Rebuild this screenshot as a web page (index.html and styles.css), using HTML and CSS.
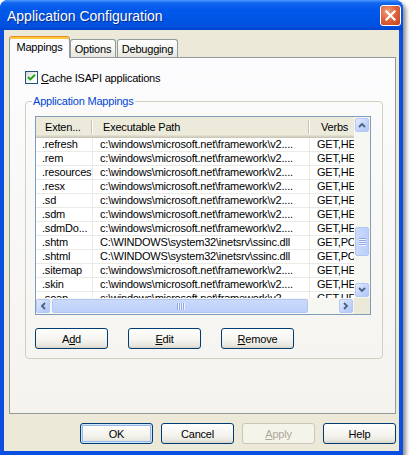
FILE: index.html
```html
<!DOCTYPE html>
<html>
<head>
<meta charset="utf-8">
<link rel="stylesheet" href="styles.css">
</head>
<body>
<div class="window">
  <div class="titlebar">
    <span class="title">Application Configuration</span>
    <span class="close"><svg width="13" height="13" viewBox="0 0 13 13"><path d="M2.5 2.5 L10.5 10.5 M10.5 2.5 L2.5 10.5" stroke="#fff" stroke-width="2.2" stroke-linecap="square" fill="none"/></svg></span>
  </div>
  <div class="client">
    <div class="tabs">
      <div class="tab active">Mappings</div>
      <div class="tab t-options">Options</div>
      <div class="tab t-debug">Debugging</div>
    </div>
    <div class="panel">
      <label class="check">
        <span class="box"><svg width="11" height="11" viewBox="0 0 11 11"><path d="M2 5 L4.3 7.4 L9 2.7" stroke="#21a121" stroke-width="2" fill="none"/></svg></span>
        <span class="check-label"><u>C</u>ache ISAPI applications</span>
      </label>
      <fieldset class="group">
        <legend>Application Mappings</legend>
        <div class="list">
          <div class="cols">
            <div class="header">
              <div class="hcell c1"><span class="htext">Exten...</span><span class="hdiv"></span></div>
              <div class="hcell c2"><span class="htext">Executable Path</span><span class="hdiv"></span></div>
              <div class="hcell c3"><span class="htext">Verbs</span></div>
            </div>
            <div class="rows">
              <div class="row"><span>.refresh</span><span>c:\windows\microsoft.net\framework\v2....</span><span>GET,HEAD,POST,DEBUG</span></div>
              <div class="row"><span>.rem</span><span>c:\windows\microsoft.net\framework\v2....</span><span>GET,HEAD,POST,DEBUG</span></div>
              <div class="row"><span>.resources</span><span>c:\windows\microsoft.net\framework\v2....</span><span>GET,HEAD,POST,DEBUG</span></div>
              <div class="row"><span>.resx</span><span>c:\windows\microsoft.net\framework\v2....</span><span>GET,HEAD,POST,DEBUG</span></div>
              <div class="row"><span>.sd</span><span>c:\windows\microsoft.net\framework\v2....</span><span>GET,HEAD,POST,DEBUG</span></div>
              <div class="row"><span>.sdm</span><span>c:\windows\microsoft.net\framework\v2....</span><span>GET,HEAD,POST,DEBUG</span></div>
              <div class="row"><span>.sdmDo...</span><span>c:\windows\microsoft.net\framework\v2....</span><span>GET,HEAD,POST,DEBUG</span></div>
              <div class="row"><span>.shtm</span><span>C:\WINDOWS\system32\inetsrv\ssinc.dll</span><span>GET,POST</span></div>
              <div class="row"><span>.shtml</span><span>C:\WINDOWS\system32\inetsrv\ssinc.dll</span><span>GET,POST</span></div>
              <div class="row"><span>.sitemap</span><span>c:\windows\microsoft.net\framework\v2....</span><span>GET,HEAD,POST,DEBUG</span></div>
              <div class="row"><span>.skin</span><span>c:\windows\microsoft.net\framework\v2....</span><span>GET,HEAD,POST,DEBUG</span></div>
              <div class="row"><span>.soap</span><span>c:\windows\microsoft.net\framework\v2....</span><span>GET,HEAD,POST,DEBUG</span></div>
            </div>
          </div>
          <div class="vscroll">
            <div class="sbtn"><svg width="8" height="6" viewBox="0 0 8 6"><path d="M1 5 L4 2 L7 5" stroke="#4d6185" stroke-width="1.8" fill="none"/></svg></div>
            <div class="vtrack"><div class="vthumb"><span class="grip-h"></span><span class="grip-h"></span><span class="grip-h"></span><span class="grip-h"></span></div></div>
            <div class="sbtn"><svg width="8" height="6" viewBox="0 0 8 6"><path d="M1 1 L4 4 L7 1" stroke="#4d6185" stroke-width="1.8" fill="none"/></svg></div>
          </div>
          <div class="hscroll">
            <div class="sbtn"><svg width="6" height="8" viewBox="0 0 6 8"><path d="M5 1 L2 4 L5 7" stroke="#4d6185" stroke-width="1.8" fill="none"/></svg></div>
            <div class="hthumb"><span class="grip-v"></span><span class="grip-v"></span><span class="grip-v"></span><span class="grip-v"></span></div>
            <div class="htrack"></div>
            <div class="sbtn"><svg width="6" height="8" viewBox="0 0 6 8"><path d="M1 1 L4 4 L1 7" stroke="#4d6185" stroke-width="1.8" fill="none"/></svg></div>
          </div>
          <div class="corner"></div>
        </div>
        <div class="actions">
          <button class="btn">A<u>d</u>d</button>
          <button class="btn"><u>E</u>dit</button>
          <button class="btn"><u>R</u>emove</button>
        </div>
      </fieldset>
    </div>
    <div class="footer">
      <button class="btn default">OK</button>
      <button class="btn">Cancel</button>
      <button class="btn disabled"><u>A</u>pply</button>
      <button class="btn">Help</button>
    </div>
  </div>
</div>
</body>
</html>
```
FILE: styles.css
```css
* { box-sizing: border-box; }

body {
  margin: 0;
  background: #ffffff;
  font-family: "Liberation Sans", Arial, sans-serif;
  font-size: 11px;
  letter-spacing: -0.2px;
  color: #000;
}

.window {
  width: 403px;
  height: 455px;
  background: #0a4fe0;
  border-radius: 8px 8px 0 0;
  box-shadow: 3px 3px 4px rgba(0, 0, 0, 0.45);
  display: flex;
  flex-direction: column;
}

.titlebar {
  height: 30px;
  flex: none;
  border-radius: 8px 8px 0 0;
  background: linear-gradient(to bottom, #4a98ff 0, #1166f0 3px, #0058ea 10px, #0054e4 20px, #0050df 26px, #0043cc 30px);
  display: flex;
  align-items: center;
  padding: 0 2px 0 7px;
}

.title {
  flex: 1;
  color: #fff;
  font-size: 14px;
  letter-spacing: 0;
  text-shadow: 1px 1px 0 #0a2a8a;
  padding-top: 1px;
}

.close {
  width: 21px;
  height: 21px;
  border: 1px solid #fff;
  border-radius: 3px;
  background: radial-gradient(circle at 35% 30%, #f0a080 0, #e0653c 45%, #c4401c 100%);
  display: flex;
  align-items: center;
  justify-content: center;
  margin-top: 1px;
}

.client {
  flex: 1;
  margin: 0 4px 4px 4px;
  background: #ece9d8;
  display: flex;
  flex-direction: column;
  padding-top: 6px;
}

.tabs {
  display: flex;
  align-items: flex-end;
  height: 21px;
  margin-left: 5px;
}

.tab {
  height: 18px;
  border: 1px solid #919b9c;
  border-bottom: none;
  border-radius: 3px 3px 0 0;
  background: linear-gradient(to bottom, #ffffff, #f3f3ef 60%, #e6e5dd);
  padding: 3px 0 0 0;
  text-align: center;
}

.tab.active {
  width: 61px;
  height: 22px;
  margin-bottom: -1px;
  position: relative;
  z-index: 1;
  background: #fcfcfe;
  border-top: 1px solid #e68b2c;
  box-shadow: inset 0 2px 0 #ffc83c;
  padding-top: 4px;
}

.t-options { width: 46px; }
.t-debug { width: 61px; margin-left: 1px; }

.panel {
  margin-left: 5px;
  width: 387px;
  height: 357px;
  border: 1px solid #919b9c;
  background: linear-gradient(to bottom, #fcfcfe, #f4f3ee);
  padding: 13px 0 0 15px;
}

.check {
  display: flex;
  align-items: center;
  height: 13px;
}

.box {
  width: 13px;
  height: 13px;
  border: 1px solid #1c5180;
  background: linear-gradient(135deg, #dcdcd6, #ffffff 80%);
  display: flex;
  align-items: center;
  justify-content: center;
}

.check-label { margin-left: 3px; }

.group {
  margin: 11px 0 0 0;
  width: 358px;
  border: 1px solid #d0d0bf;
  border-radius: 4px;
  padding: 8px 9px 9px 9px;
  min-inline-size: 0;
}

.group legend {
  color: #0046d5;
  padding: 0 1px;
  margin-left: -3px;
  line-height: 13px;
}

.list {
  width: 336px;
  height: 199px;
  border: 1px solid #7f9db9;
  background: #fff;
  display: grid;
  grid-template-columns: 318px 16px;
  grid-template-rows: 181px 16px;
}

.cols {
  overflow: hidden;
}

.header {
  display: flex;
  height: 21px;
  background: #ebeadb;
  box-shadow: inset 0 -1px 0 #cbc7b8, inset 0 -2px 0 #d6d2c2, inset 0 -3px 0 #e2decd;
}

.hcell {
  display: flex;
  align-items: center;
  flex: none;
  padding-bottom: 2px;
}

.c1 { width: 57px; }
.c2 { width: 217px; }
.c3 { width: 100px; }

.htext {
  flex: 1;
  padding-left: 9px;
  white-space: nowrap;
}

.c2 .htext { padding-left: 10px; }
.c3 .htext { padding-left: 11px; }

.hdiv {
  width: 2px;
  height: 14px;
  border-left: 1px solid #c7c5b2;
  border-right: 1px solid #ffffff;
  margin-top: 1px;
}

.rows {
  height: 160px;
  overflow: hidden;
}

.row {
  display: grid;
  grid-template-columns: 57px 217px 100px;
  height: 14px;
  line-height: 13px;
}

.row span {
  white-space: nowrap;
  overflow: hidden;
  border-bottom: 1px solid #ebebe6;
  border-right: 1px solid #ebebe6;
  padding-left: 6px;
}

.row span:nth-child(2) { padding-left: 7px; }
.row span:nth-child(3) { padding-left: 7px; }

.sbtn {
  width: 14px;
  height: 14px;
  flex: none;
  border: 1px solid #b4c8f6;
  border-radius: 2px;
  background: linear-gradient(135deg, #e2eafe, #c1d3fb 60%, #b0c6f5);
  display: flex;
  align-items: center;
  justify-content: center;
}

.vscroll {
  display: flex;
  flex-direction: column;
  padding: 1px;
  background: #f7f7f2;
}

.vtrack {
  flex: 1;
  padding-top: 95px;
}

.vthumb {
  height: 29px;
  width: 14px;
  border: 1px solid #b2c6f4;
  border-radius: 2px;
  background: linear-gradient(to right, #cbdafc, #bccffa);
  display: flex;
  flex-direction: column;
  align-items: center;
  justify-content: center;
  gap: 1px;
}

.grip-h {
  width: 7px;
  height: 1px;
  background: #8ea8e6;
  box-shadow: 0 1px 0 #eef3ff;
}

.hscroll {
  display: flex;
  align-items: center;
  padding: 1px 1px 1px 0;
  background: #f7f7f2;
}

.hthumb {
  width: 256px;
  height: 14px;
  margin-left: 2px;
  border: 1px solid #b2c6f4;
  border-radius: 2px;
  background: linear-gradient(to bottom, #cbdafc, #bccffa);
  display: flex;
  align-items: center;
  justify-content: center;
  gap: 1px;
}

.grip-v {
  width: 1px;
  height: 7px;
  background: #8ea8e6;
  box-shadow: 1px 0 0 #eef3ff;
}

.htrack { flex: 1; }

.corner { background: #ece9d8; }

.actions {
  display: flex;
  gap: 20px;
  margin-top: 13px;
}

.btn {
  width: 73px;
  height: 21px;
  border: 1px solid #003c74;
  border-radius: 3px;
  background: linear-gradient(to bottom, #ffffff, #f5f4ef 55%, #e9e8e0 85%, #d8d3c8);
  font-family: "Liberation Sans", Arial, sans-serif;
  font-size: 11px;
  letter-spacing: -0.2px;
  color: #000;
  padding: 0;
}

.btn.default {
  box-shadow: inset 0 0 0 1px #cee7ff, inset 0 0 0 2px #98b8ea;
}

.btn.disabled {
  border-color: #c9c7ba;
  background: #f5f4ea;
  color: #aca899;
}

.footer {
  display: flex;
  justify-content: flex-end;
  gap: 8px;
  margin-top: 9px;
  padding-right: 3px;
}
```
